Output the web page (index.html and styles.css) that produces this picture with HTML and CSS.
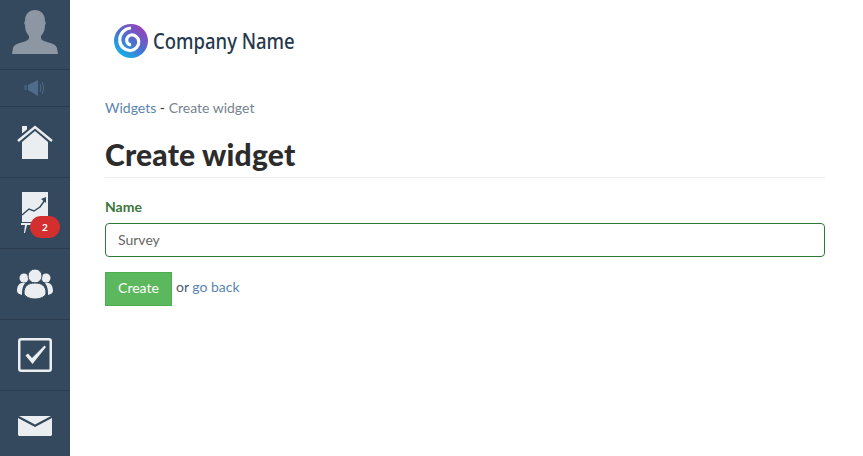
FILE: index.html
```html
<!DOCTYPE html>
<html lang="en">
<head>
  <meta charset="UTF-8">
  <meta name="viewport" content="width=device-width, initial-scale=1.0">
  <title>Create widget</title>
  <link rel="stylesheet" href="styles.css">
</head>
<body>
  <div class="page">
    <nav class="sidebar">
      <div class="navItem navUser">
        <svg width="48" height="46" viewBox="0 0 48 46"><path fill="#8c97a3" d="M1 44 2 38C3 34 9 33 15 31 18 30 18 28 18 26 15 23 14 19 14 15 13 14 13 12 14 11 14 4 18 0 24 0 30 0 34 4 34 11 35 12 35 14 34 15 34 19 33 23 30 26 30 28 30 30 33 31 39 33 45 34 46 38L47 44Z"/></svg>
      </div>
      <div class="navItem navSound">
        <svg width="24" height="16" viewBox="0 0 24 16"><path fill="#3f5b7a" d="M1 5h3v5H1z"/><path fill="#4f6c8c" d="M5 5 15 0v16L5 10z"/><path fill="none" stroke="#4f6c8c" d="M17 4c1 2 1 6 0 8M19 2c2 3 2 9 0 12"/></svg>
      </div>
      <div class="navItem">
        <svg width="36" height="36" viewBox="0 0 36 36"><path fill="#ebeef0" d="M5 35V18L18 7l13 11v17z"/><path fill="#ebeef0" d="M5 2h5v4L5 10z"/><path fill="none" stroke="#34495e" stroke-width="1.500" d="M3 12 18 0l15 12"/><path fill="none" stroke="#ebeef0" stroke-width="2.400" d="M1 17 18 3l17 14"/></svg>
      </div>
      <div class="navItem navChart">
        <svg width="28" height="42" viewBox="0 0 28 42"><path fill="#ebeef0" d="M1 0h26v30H1z"/><path fill="none" stroke="#34495e" stroke-width="1.500" d="M1 23l7-6 5 2 6-4 5-7"/><path fill="#34495e" d="M20 7l5-2v6z"/><path fill="#ebeef0" d="M0 31h10v2H6l-2 8H3l1-8H0z"/></svg>
        <span class="badge">2</span>
      </div>
      <div class="navItem">
        <svg width="36" height="30" viewBox="0 0 36 30"><circle cx="7" cy="9" r="4.500" fill="#ebeef0"/><circle cx="29" cy="9" r="4.500" fill="#ebeef0"/><path fill="#ebeef0" d="M0 22C0 16 3 13 8 14 5 18 5 22 5 26 2 25 0 24 0 22ZM36 22C36 16 33 13 28 14 31 18 31 22 31 26 34 25 36 24 36 22Z"/><circle cx="18" cy="7" r="7" stroke="#34495e" fill="#ebeef0"/><path fill="#ebeef0" stroke="#34495e" d="M7 24C7 17 11 14 18 14 25 14 29 17 29 24 29 27 24 30 18 30 12 30 7 27 7 24Z"/></svg>
      </div>
      <div class="navItem">
        <svg width="34" height="34" viewBox="0 0 34 34"><rect x="1.250" y="1.250" width="31.500" height="31.500" rx="2" fill="none" stroke="#ebeef0" stroke-width="2.500"/><path fill="#ebeef0" d="M7.500 17.500 10 15.500 14 20 26.500 7.500 28 9 14.500 26z"/></svg>
      </div>
      <div class="navItem navLast">
        <svg width="34" height="20" viewBox="0 0 34 20"><path fill="#ebeef0" d="M0 2 17 11 34 2V19L33 20H1L0 19Z"/><path fill="#ebeef0" d="M1 0H33L17 8.500Z"/></svg>
      </div>
    </nav>

    <main class="content">
      <div class="logo">
        <svg width="34" height="34" viewBox="0 0 34 34">
          <defs>
            <linearGradient id="swirl" x1="0.850" y1="0.050" x2="0.150" y2="0.950">
              <stop offset="0" stop-color="#a03db8"/>
              <stop offset="0.500" stop-color="#4a6fd0"/>
              <stop offset="1" stop-color="#10b8e8"/>
            </linearGradient>
          </defs>
          <circle cx="17" cy="17" r="17" fill="url(#swirl)"/>
          <path fill="none" stroke="#fff" stroke-width="3.200" d="M17 4A12 12 0 0 0 5.800 17 10.400 10.400 0 0 0 17 26.500 8.600 8.600 0 0 0 24.700 17 6.900 6.900 0 0 0 17 11 5.100 5.100 0 0 0 12.800 17 3.600 3.600 0 0 0 17 20.500"/>
        </svg>
        <span class="logoText">Company Name</span>
      </div>

      <div class="breadcrumb">
        <a href="#">Widgets</a><span class="sep"> - </span><span class="current">Create widget</span>
      </div>

      <h1 class="title">Create widget</h1>

      <form class="widgetForm">
        <label class="fieldLabel" for="name">Name</label>
        <input class="fieldInput" type="text" id="name" value="Survey">
        <div class="actions">
          <button type="button" class="createBtn">Create</button>
          <span class="orBack">or <a href="#">go back</a></span>
        </div>
      </form>
    </main>
  </div>
</body>
</html>
```

FILE: styles.css
```css
html, body {
  margin: 0;
  height: 100%;
}

body {
  font-family: "Lato", "Liberation Sans", sans-serif;
  font-size: 14px;
  color: #4a5a6a;
  background: #fff;
  overflow: hidden;
}

a {
  color: #5a84b0;
  text-decoration: none;
}

.page {
  display: flex;
  height: 456px;
}

.sidebar {
  width: 70px;
  flex-shrink: 0;
  background: #34495e;
}

.navItem {
  height: 70px;
  border-bottom: 1px solid #2a3c4e;
  display: flex;
  align-items: center;
  justify-content: center;
  position: relative;
}

.navUser {
  height: 69px;
  align-items: flex-end;
}

.navUser svg {
  margin-bottom: 13px;
}

.navSound {
  height: 36px;
}

.navLast {
  border-bottom: none;
}

.badge {
  position: absolute;
  left: 30px;
  top: 38px;
  width: 30px;
  height: 22px;
  border-radius: 11px;
  background: #d32f2f;
  color: #fff;
  font-size: 10px;
  font-weight: 700;
  line-height: 22px;
  text-align: center;
}

.content {
  flex: 1;
  padding: 0 38px 0 35px;
}

.logo {
  display: flex;
  align-items: center;
  gap: 5px;
  padding: 24px 0 0 9px;
}

.logoText {
  font-family: "Noto Sans", sans-serif;
  font-size: 21px;
  font-weight: 500;
  color: #26394d;
  transform: scaleX(0.88);
  transform-origin: left center;
}

.breadcrumb {
  margin-top: 40px;
  line-height: 20px;
}

.breadcrumb .sep {
  color: #333;
}

.breadcrumb .current {
  color: #76838f;
}

.title {
  margin: 18px 0 0;
  padding-bottom: 5px;
  font-size: 30px;
  line-height: 36px;
  font-weight: 900;
  letter-spacing: 0.2px;
  color: #2c2c2c;
  border-bottom: 1px solid #eeeeee;
}

.widgetForm {
  margin-top: 19px;
}

.fieldLabel {
  display: block;
  font-weight: 700;
  color: #3c763d;
  line-height: 20px;
  margin-bottom: 6px;
}

.fieldInput {
  display: block;
  box-sizing: border-box;
  width: 100%;
  height: 34px;
  padding: 0 12px 2px;
  border: 1px solid #2f7a36;
  border-radius: 4px;
  font-family: inherit;
  font-size: 14px;
  color: #666;
}

.actions {
  display: flex;
  align-items: center;
  gap: 4px;
  margin-top: 15px;
}

.createBtn {
  width: 67px;
  height: 34px;
  background: #5cb85c;
  border: 1px solid #4cae4c;
  color: #fff;
  font-family: inherit;
  font-size: 14px;
  padding: 0 0 3px;
}

.orBack {
  position: relative;
  top: -3px;
}
```
